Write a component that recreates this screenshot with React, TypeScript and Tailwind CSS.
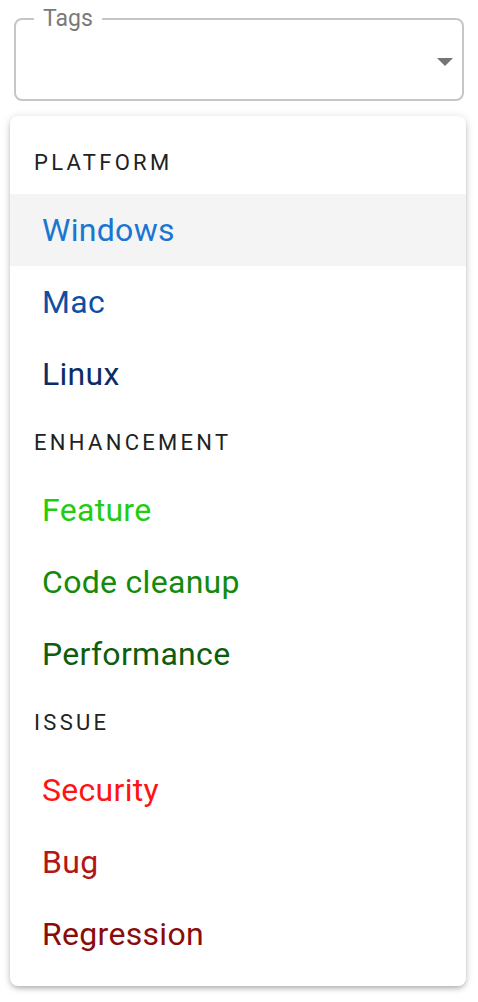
const groups = [
  {
    title: 'Platform',
    items: [
      { label: 'Windows', color: 'text-[#1976d2]', active: true },
      { label: 'Mac', color: 'text-[#0d4fa3]' },
      { label: 'Linux', color: 'text-[#0b2d66]' },
    ],
  },
  {
    title: 'Enhancement',
    items: [
      { label: 'Feature', color: 'text-[#22cc11]' },
      { label: 'Code cleanup', color: 'text-[#138a0b]' },
      { label: 'Performance', color: 'text-[#0e5c0e]' },
    ],
  },
  {
    title: 'Issue',
    items: [
      { label: 'Security', color: 'text-[#ff1414]' },
      { label: 'Bug', color: 'text-[#b31616]' },
      { label: 'Regression', color: 'text-[#8b0b0b]' },
    ],
  },
];

export default function App() {
  return (
    <div className="min-h-screen bg-white font-['Roboto',sans-serif]">
      {/* champ Tags */}
      <div className="pt-[7px] px-[14px]">
        <fieldset className="relative h-[94px] border-2 border-[#c6c6c6] rounded-[8px] pl-[18px] pr-[10px]">
          <legend className="px-[9px] text-[23px] leading-[23px] text-[#7a7a7a]">Tags</legend>
          <svg
            className="absolute right-[9px] top-[28px]"
            width="16"
            height="8"
            viewBox="0 0 16 8"
          >
            <polygon points="0,0 16,0 8,8" fill="#757575" />
          </svg>
        </fieldset>
      </div>

      {/* menu */}
      <div className="mx-[10px] mt-[15px] w-[456px] rounded-[8px] bg-white pt-[14px] pb-[16px] shadow-[0_3px_6px_-2px_rgba(0,0,0,0.35),0_1px_10px_rgba(0,0,0,0.12)]">
        {groups.map((g) => (
          <div key={g.title}>
            <div className="h-16 flex items-center pl-6 text-[22px] tracking-[3.3px] uppercase text-[#222]">
              {g.title}
            </div>
            {g.items.map((it) => (
              <div
                key={it.label}
                className={`h-[72px] flex items-center pl-8 text-[32px] tracking-[0.3px] ${it.color} ${it.active ? 'bg-[#f4f4f4]' : ''}`}
              >
                {it.label}
              </div>
            ))}
          </div>
        ))}
      </div>
    </div>
  );
}
